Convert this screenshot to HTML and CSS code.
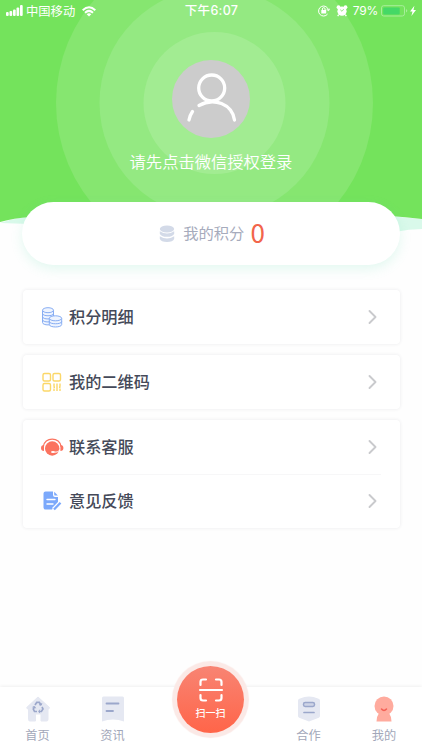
FILE: index.html
```html
<!DOCTYPE html>
<html lang="zh-CN">
<head>
<meta charset="utf-8">
<title>我的</title>
<link rel="stylesheet" href="styles.css">
</head>
<body>
<div class="app">
  <header class="hero">
    <svg class="hero-bg" viewBox="0 0 422 240" width="422" height="240" aria-hidden="true">
      <defs><clipPath id="hero"><path d="M0 0H422V219Q405 217 390 216L30 217Q14 218 0 222Z"/></clipPath></defs>
      <path fill="#d9f9ea" d="M0 223Q15 217 40 216H390L422 219V229Q409 229 395 232H30V224Z"/>
      <g clip-path="url(#hero)">
        <path fill="#74e35c" d="M0 0H422V240H0Z"/>
        <circle cx="214.500" cy="103" r="158.500" fill="#86e670"/>
        <circle cx="214.500" cy="103" r="115" fill="#94e982"/>
        <circle cx="214.500" cy="103" r="71" fill="#a2ec92"/>
      </g>
    </svg>
    <div class="status">
      <div class="status-left">
        <svg width="17" height="12" viewBox="0 0 17 12" fill="#fff"><rect x="0" y="7" width="2.700" height="4" rx="1"/><rect x="3.500" y="6" width="2.700" height="5" rx="1"/><rect x="7" y="4.500" width="2.700" height="6.500" rx="1"/><rect x="10.500" y="2.500" width="2.700" height="8.500" rx="1"/><rect x="14" y="0" width="2.700" height="11" rx="1"/></svg>
        <span class="carrier">中国移动</span>
        <svg class="wifi" width="14" height="11" viewBox="0 0 14 11" fill="none" stroke="#fff" stroke-width="2"><path d="M.7 4.200Q7-1.800 13.300 4.200M3 6.700Q7 3.100 11 6.700"/><path fill="#fff" stroke="none" d="M4.700 8.200Q7 6.300 9.300 8.200L7 10.500Z"/></svg>
      </div>
      <time class="clock">下午6:07</time>
      <div class="status-right">
        <svg width="12" height="12" viewBox="0 0 12 12" fill="none" stroke="#fff"><path d="M9.600 9A5 5 0 1 1 10.500 5.200M8.600 4.300l2 1.400 1-2M4.400 5.300V4a1.350 1.350 0 0 1 2.700 0v1.300"/><rect x="3.300" y="5" width="4.900" height="3.500" fill="#fff" stroke="none"/></svg>
        <svg class="alarm" width="12" height="12" viewBox="0 0 12 12"><g fill="#fff"><circle cx="6" cy="6.200" r="4.600"/><circle cx="2.500" cy="2.200" r="1.900"/><circle cx="9.500" cy="2.200" r="1.900"/></g><path d="M2.700 9.600l-1 1.500M9.300 9.600l1 1.500" stroke="#fff" stroke-width="1.300"/><path d="M4.200 4.600L6 6.300l1.700-2.200" fill="none" stroke="#83df70" stroke-width=".8"/></svg>
        <span class="percent">79%</span>
        <svg class="battery" width="36" height="12" viewBox="0 0 36 12"><rect x=".5" y=".7" width="23" height="10.300" rx="2.200" fill="none" stroke="#a7ee9b"/><rect x="2.200" y="2.400" width="16.500" height="7" rx="1" fill="#45d866"/><path d="M25 4.200v3.300q1.300-.4 1.300-1.650T25 4.200Z" fill="#a7ee9b"/><path d="M33.400.8L29 6.600h2.500L30.400 11 35 5.100h-2.500Z" fill="#fff"/></svg>
      </div>
    </div>
    <div class="avatar">
      <svg width="78" height="78" viewBox="0 0 78 78" fill="none" stroke="#fff" stroke-width="3.300" stroke-linecap="round"><circle cx="39.700" cy="28" r="13"/><path d="M27 45.500C42 37 60 44 62.500 60M20.500 51.500Q18 55 17 60"/></svg>
    </div>
    <p class="login">请先点击微信授权登录</p>
    <section class="points">
      <svg width="16" height="18" viewBox="0 0 16 18" fill="#d3dae8"><ellipse cx="8" cy="4" rx="7.200" ry="3.500"/><path d="M.8 6.200Q8 11 15.200 6.200V8.700Q14 11.800 8 11.800T.8 8.700ZM.8 11.200Q8 16 15.200 11.200V13.700Q14 17 8 17T.8 13.700Z"/></svg>
      <span class="points-label">我的积分</span><strong class="points-value">0</strong>
    </section>
  </header>
  <main class="menu">
    <section class="card"><a class="row">
      <svg class="icon" viewBox="0 0 24 24" fill="#eef4ff" stroke="#87adf3"><path d="M2.500 5.200v12.300c0 3.200 11 3.200 11 0V5.200"/><ellipse cx="8" cy="5.200" rx="5.500" ry="2.500"/><path fill="none" d="M2.500 8.500c0 3 11 3 11 0M2.500 11.700c0 3 11 3 11 0M2.500 14.700c0 3 11 3 11 0"/><path d="M9.300 13.500v6c0 3.300 12.400 3.300 12.400 0v-6"/><ellipse cx="15.500" cy="13.300" rx="6.200" ry="2.500"/><path fill="none" d="M9.300 16.500c0 3 12.400 3 12.400 0"/></svg>
      <span class="row-label">积分明细</span><svg class="chevron" viewBox="0 0 10 16"><path d="M1.500 2l6 6-6 6"/></svg></a></section>
    <section class="card"><a class="row">
      <svg class="icon" viewBox="0 0 24 24" fill="none" stroke="#fbd768" stroke-width="1.400"><rect x="3" y="3.500" width="7.500" height="7.500" rx="1.500"/><rect x="13" y="3.500" width="7.500" height="7.500" rx="1.500"/><rect x="3" y="13.500" width="7.500" height="7.500" rx="1.500"/><path d="M14 13.500v3M14 18.500v2.500M17 13.500v7.500M20 13.500v3M20 18.500v2.500M13.500 17.300h1.500M19 17.300h1.500"/></svg>
      <span class="row-label">我的二维码</span><svg class="chevron" viewBox="0 0 10 16"><path d="M1.500 2l6 6-6 6"/></svg></a></section>
    <section class="card"><a class="row">
      <svg class="icon" viewBox="0 0 24 24"><circle cx="12.200" cy="13.500" r="7.200" fill="#fb735f"/><path d="M3.200 12C4.200 1.500 20.200 1.500 21.200 12" fill="none" stroke="#fb735f" stroke-width="1.300"/><path d="M4 10v6Q1 16 1 13t3-3M20.400 10v6q3 0 3-3t-3-3" fill="#fb735f"/><path d="M19.500 15.500q-2.200 2-5 1.700" fill="none" stroke="#fff"/><ellipse cx="13" cy="17" rx="2" ry="1.100" fill="#fff"/></svg>
      <span class="row-label">联系客服</span><svg class="chevron" viewBox="0 0 10 16"><path d="M1.500 2l6 6-6 6"/></svg></a>
      <a class="row divided">
      <svg class="icon" viewBox="0 0 24 24"><path fill="#7ca9fb" d="M5.500 2.500H13V6q0 2 2 2h3v5.500L12 20.500H5.500q-2 0-2-2v-14q0-2 2-2Z"/><path fill="#7ca9fb" d="M14.200 2.700L17.900 6.600h-2.500q-1.200 0-1.200-1.200Z"/><path d="M7 10.500h8M7 15h6" stroke="#fff" stroke-width="1.400" stroke-linecap="round"/><path d="M13.500 20.500l6.700-6.900" stroke="#fff" stroke-width="4"/><path d="M14 20.500l6.500-6.700" stroke="#7ca9fb" stroke-width="2.300"/></svg>
      <span class="row-label">意见反馈</span><svg class="chevron" viewBox="0 0 10 16"><path d="M1.500 2l6 6-6 6"/></svg></a></section>
  </main>
  <nav class="tabs">
    <a class="tab"><svg viewBox="0 0 28 28"><path fill="#e5e8f2" stroke="#e5e8f2" stroke-linejoin="round" d="M14 2L25.500 12.500 24.800 14H24v10.500q0 1.500-1.500 1.500H17v-7h-5.500v7H6q-1.500 0-1.500-1.500V14h-1l-.8-1.500Z"/><g fill="none" stroke="#9ba7cb" stroke-width="1.700"><path d="M11 10l1.800-2.700h2.500L17 10M18 12l1 2-1.600 2.500H15M13 16.500h-2.500L9.300 14l1.200-2.200"/><path d="M15 9.700l2.200.5.600-2M15.800 14.700L14.700 16.500l1.100 1.600M8.500 12.200l2.100-.8 1 1.900" stroke-width="1"/></g></svg><span>首页</span></a>
    <a class="tab"><svg viewBox="0 0 28 28"><path fill="#e5e8f2" d="M4.500 1.500h19q1.500 0 1.500 1.500v23.500Q14 22.500 3 26.500V3q0-1.500 1.500-1.500Z"/><path stroke="#9ba7cb" stroke-width="1.800" stroke-linecap="round" d="M7.500 8.500h12M7.500 16h6.500"/></svg><span>资讯</span></a>
    <a class="scan"><svg width="26" height="26" viewBox="0 0 26 26" fill="none" stroke="#fff" stroke-width="2.200" stroke-linecap="round"><path d="M2.500 8V5q0-2.500 2.500-2.500h3M18 2.500h3q2.500 0 2.500 2.500v3M2.500 18v3q0 2.500 2.500 2.500h3M18 23.500h3q2.500 0 2.500-2.500v-3M2 13h22"/></svg><span>扫一扫</span></a>
    <a class="tab"><svg viewBox="0 0 28 28"><path fill="#e5e8f2" d="M5 3.500Q14-.5 23 3.500q2 .5 2 2V21q0 1.200-1.200 1.800L14 26.500l-9.800-3.700Q3 22.200 3 21V5.500q0-1.500 2-2Z"/><rect x="8.500" y="7.500" width="11" height="4" rx="1.700" fill="#cfd5e7" stroke="#9ba7cb" stroke-width="1.500"/><path stroke="#9ba7cb" stroke-width="1.700" stroke-linecap="round" d="M9 17.500h10"/></svg><span>合作</span></a>
    <a class="tab"><svg viewBox="0 0 28 28"><circle cx="14" cy="11" r="9.500" fill="#ffab9e"/><path fill="#ffab9e" d="M9 18h10q2.500 3.500 2.500 8.500h-15Q6.500 21.500 9 18Z"/><path d="M11.500 14q2.500 2.800 5 0" fill="none" stroke="#f46055" stroke-width="1.500" stroke-linecap="round"/></svg><span>我的</span></a>
  </nav>
</div>
</body>
</html>
```
FILE: styles.css
```css
* { box-sizing: border-box; }
body { margin: 0; background: #fefefe; font-family: "Noto Sans CJK SC", sans-serif; }
svg { display: block; flex: none; }
.app { width: 422px; height: 750px; display: flex; flex-direction: column; overflow: hidden; }
.hero { position: relative; height: 265px; display: flex; flex-direction: column; align-items: center; flex: none; }
.hero > * { position: relative; }
.hero .hero-bg { position: absolute; top: 0; left: 0; }
.status { width: 100%; height: 22px; padding: 0 5px 0 6px; display: grid; grid-template-columns: 1fr auto 1fr; align-items: center; color: #fff; font-size: 12px; line-height: 22px; }
.status-left, .status-right { display: flex; align-items: center; }
.status-right { justify-content: flex-end; }
.carrier { margin-left: 3px; font-size: 12.3px; }
.wifi { margin-left: 7px; }
.clock { font-family: Inter, "Noto Sans CJK SC", sans-serif; font-weight: 500; font-size: 12.5px; letter-spacing: .3px; }
.alarm { margin-left: 6px; }
.percent { font-family: Inter, sans-serif; font-size: 12px; letter-spacing: -.2px; margin: 0 3px 0 5px; }
.avatar { width: 78px; height: 78px; margin-top: 38px; border-radius: 50%; background: #ccc; }
.login { margin: 11px 0 0; height: 24px; line-height: 24px; font-size: 16.3px; color: #fff; font-weight: 350; }
.points { width: 378px; height: 63px; margin-top: 29px; padding-left: 2px; border-radius: 32px; background: #fff; box-shadow: 0 4px 12px rgba(99, 224, 176, .18); display: flex; align-items: center; justify-content: center; }
.points-label { margin: -3px 0 0 8px; font-size: 15.3px; color: #a6abbc; }
.points-value { margin: -3px 0 0 6px; font-size: 26px; line-height: 40px; font-weight: 400; color: #f2654b; }
.menu { padding: 25px 22px 0 23px; display: flex; flex-direction: column; gap: 11px; }
.card { border-radius: 4px; background: #fff; box-shadow: 0 0 3px 1px rgba(45, 55, 75, .06); padding: 0 19px 0 17px; }
.row { height: 54px; display: flex; align-items: center; }
.divided { background: linear-gradient(#f7f7f8, #f7f7f8) 0 0 / 100% 1px no-repeat; }
.icon { width: 24px; height: 24px; }
.row-label { flex: 1; margin: -2px 0 0 5px; font-size: 16.2px; line-height: 24px; font-weight: 500; color: #454a59; }
.chevron { width: 10px; height: 16px; margin-right: 3px; fill: none; stroke: #c9cacd; stroke-width: 1.9; stroke-linecap: round; stroke-linejoin: round; }
.tabs { height: 63px; margin-top: auto; flex: none; display: grid; grid-template-columns: 75px 75px 121px 75px 76px; background: #fff; box-shadow: 0 -1px 3px rgba(0, 0, 0, .06); }
.tab { display: flex; flex-direction: column; align-items: center; padding-top: 8px; font-size: 12.2px; line-height: 18px; color: #a2a7b9; }
.tab svg { width: 28px; height: 28px; }
.tab span { margin-top: 3px; }
.scan { width: 67px; height: 67px; margin-top: -21px; justify-self: center; border-radius: 50%; background: linear-gradient(#f88473, #ff6549); box-shadow: 0 0 1px 5px #fbe9e6; color: #fff; font-size: 10px; line-height: 14px; font-weight: 500; display: flex; flex-direction: column; align-items: center; padding-top: 11px; }
.scan span { margin-top: 3px; }
```
